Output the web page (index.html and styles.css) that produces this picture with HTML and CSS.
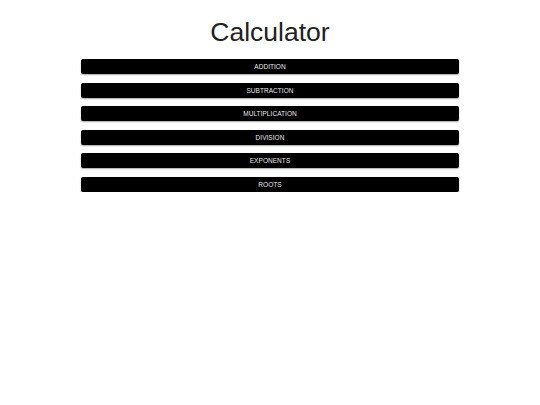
FILE: index.html
```html
<!DOCTYPE html>
<html>
<head>
<meta charset="utf-8">
<link rel="stylesheet" href="styles.css">
</head>
<body>
<h1 class="title">Calculator</h1>
<div class="menu">
  <button class="op">ADDITION</button>
  <button class="op">SUBTRACTION</button>
  <button class="op">MULTIPLICATION</button>
  <button class="op">DIVISION</button>
  <button class="op">EXPONENTS</button>
  <button class="op">ROOTS</button>
</div>
</body>
</html>
```
FILE: styles.css
```css
html, body {
  margin: 0;
  padding: 0;
  background: #fff;
  font-family: "Liberation Sans", Arial, sans-serif;
}
.title {
  margin: 16px 0 0;
  text-align: center;
  font-weight: normal;
  font-size: 26.5px;
  line-height: 32px;
  color: #222;
}
.menu {
  width: 70%;
  margin: 11px auto 0;
  display: flex;
  flex-direction: column;
  gap: 8.6px;
}
.op {
  display: block;
  width: 100%;
  height: 15px;
  margin: 0;
  padding: 0;
  border: none;
  border-radius: 2px;
  background: #000;
  color: #e8e8e8;
  font-family: "Liberation Sans", Arial, sans-serif;
  font-size: 6.5px;
  font-weight: normal;
  letter-spacing: 0.05px;
  box-shadow: 0 1px 1.5px rgba(0,0,0,0.35);
}
```
